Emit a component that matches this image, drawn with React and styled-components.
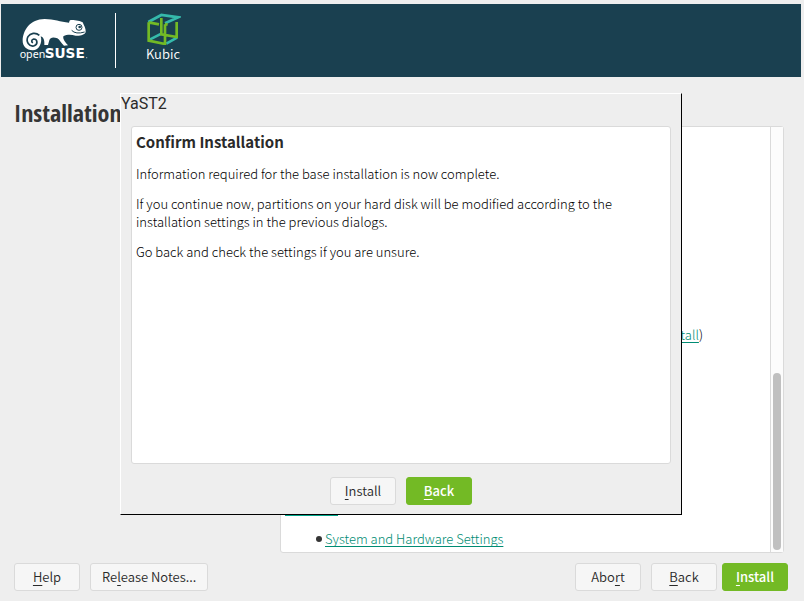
import React from "react";
import styled, { createGlobalStyle, css } from "styled-components";

const Global = createGlobalStyle`
  * { box-sizing: border-box; }
  body {
    margin: 0;
    background: #eeeeee;
    color: #000000;
    font: 300 13px/18px "Noto Sans CJK JP", "Noto Sans", sans-serif;
  }
`;

const Page = styled.div`
  display: flex;
  flex-direction: column;
  min-height: 100vh;
`;

const Banner = styled.header`
  display: flex;
  align-items: flex-start;
  margin: 4px 3px 0 1px;
  padding: 9px 18px;
  background: #1a4050;
  color: #ffffff;
`;

const BrandLogo = styled.svg`
  width: 70px;
  height: 47px;
  margin-top: 3px;
`;

const Separator = styled.div`
  width: 1px;
  height: 55px;
  margin: 0 29px 0 26px;
  background: #ffffff;
`;

const Product = styled.div`
  display: flex;
  flex-direction: column;
  align-items: center;
  font-size: 13px;
  font-weight: 350;
`;

const CubeLogo = styled.svg`
  width: 36px;
  height: 32px;
`;

const Main = styled.main`
  display: flex;
  flex: 1;
  padding: 0 20px 0 14px;
`;

const Title = styled.h1`
  flex: none;
  width: 266px;
  margin: 21px 0 0;
  color: #353535;
  font: bold 24px/30px "Open Sans Condensed", "Noto Sans Condensed", "Roboto Condensed", "Noto Sans CJK JP", sans-serif;
`;

const Panel = styled.section`
  display: flex;
  flex: 1;
  margin-top: 49px;
  border: 1px solid #dadada;
  border-radius: 3px;
  background: #ffffff;
`;

const Summary = styled.div`
  display: flex;
  flex: 1;
  flex-direction: column;
  justify-content: flex-end;
  padding: 0 4px 4px;
`;

const PartitionLine = styled.div`
  margin: 0 63px 171px;
  text-align: right;
`;

const SectionRule = styled.div`
  width: 53px;
  height: 1px;
  margin-bottom: 14px;
  background: #00a489;
`;

const List = styled.ul`
  margin: 0;
  padding: 0 0 0 31px;
  list-style: none;
`;

const Item = styled.li`
  display: flex;
  align-items: center;
  gap: 3px;

  &::before {
    content: "";
    width: 6px;
    height: 6px;
    border-radius: 50%;
    background: #353535;
  }
`;

const Link = styled.a`
  color: #008c73;
  text-decoration: underline;
  text-decoration-thickness: 1px;
  text-underline-offset: 2px;
  text-decoration-skip-ink: none;
`;

const Track = styled.div`
  display: flex;
  align-items: flex-end;
  width: 13px;
  padding: 2px;
  border-left: 1px solid #dadada;
  background: #fcfcfc;
`;

const Thumb = styled.div`
  width: 8px;
  height: 42%;
  border-radius: 4px;
  background: #c0c0c0;
`;

const Footer = styled.footer`
  display: flex;
  justify-content: space-between;
  padding: 10px 16px 10px 14px;
`;

const Group = styled.div`
  display: flex;
  gap: ${(p) => p.$gap || 10}px;
`;

const Button = styled.button`
  min-width: 66px;
  height: 28px;
  padding: 0 11px;
  border: 1px solid #dadada;
  border-radius: 3px;
  background: #f6f6f6;
  color: #2a2a2a;
  font: 350 13px/18px "Noto Sans CJK JP", "Noto Sans", sans-serif;

  ${(p) =>
    p.$primary &&
    css`
      border-color: #73ba25;
      background: #73ba25;
      color: #ffffff;
      font-weight: 500;
    `}
`;

const Key = styled.span`
  text-decoration: underline;
  text-decoration-thickness: 1px;
  text-underline-offset: 3px;
  text-decoration-skip-ink: none;
`;

const Overlay = styled.div`
  position: absolute;
  inset: 0;
  display: flex;
  padding: 93px 122px 86px 120px;
`;

const Dialog = styled.div`
  display: flex;
  flex: 1;
  flex-direction: column;
  border: 1px solid #000000;
  border-top-color: #ffffff;
  border-left-color: #ffffff;
  background: #eeeeee;
`;

const DialogTitle = styled.div`
  color: #2a2a2a;
  font: 16px/20px Roboto, sans-serif;
`;

const Message = styled.div`
  flex: 1;
  margin: 12px 10px 0;
  padding: 5px 4px;
  border: 1px solid #dadada;
  border-radius: 3px;
  background: #ffffff;
`;

const Heading = styled.h2`
  margin: 0 0 13px;
  color: #2a2a2a;
  font-size: 15px;
  line-height: 20px;
  font-weight: bold;
`;

const Text = styled.p`
  max-width: 500px;
  margin: 0 0 12px;
`;

const DialogActions = styled.div`
  display: flex;
  justify-content: center;
  gap: 10px;
  padding: 13px 0 9px;
`;

function Geeko() {
  return (
    <BrandLogo viewBox="57 48 210 141" role="img" aria-label="openSUSE">
      <path
        fill="#fff"
        d="M68 123C68 92 90 57 134 57C162 57 181 66 207 68C209 65 207 61 212 60C223 60 235 61 248 67C252 78 258 85 257 96C254 105 241 108 227 107C213 104 202 103 190 109C188 119 197 128 204 136L192 137C183 129 179 119 172 115C161 111 151 111 148 121L144 135L133 135C134 122 131 111 122 109C128 127 118 151 98 151C79 150 68 138 68 123Z"
      />
      <path
        d="M118 106C107 96 91 99 84 110C76 125 88 140 101 138C115 134 113 117 101 117C94 119 93 126 99 128"
        fill="none"
        stroke="#1a4050"
        strokeWidth="5"
      />
      <circle cx="237" cy="82" r="9" fill="none" stroke="#1a4050" strokeWidth="3" />
      <circle cx="239" cy="81" r="4" fill="#1a4050" />
      <path d="M215 91Q227 104 254 96" fill="none" stroke="#1a4050" strokeWidth="3" />
      <text x="59" y="175" fontFamily="Noto Sans" fontWeight="400" fontSize="32" fill="#fff">open</text>
      <text x="134" y="175" fontFamily="DejaVu Sans" fontWeight="700" fontSize="41" fill="#fff">SUSE</text>
      <circle cx="260" cy="173" r="2" fill="#9db0b8" />
    </BrandLogo>
  );
}

function Cube() {
  return (
    <CubeLogo viewBox="436 39 108 96" aria-hidden="true">
      <g fill="none" strokeWidth="8">
        <path d="M446 66L485 45L536 52L496 70M450 119L485 101M500 131L532 113" stroke="#35b9ab" />
        <path d="M447 67V122L496 132V73M447 67L478 73M485 54V103L531 111V66M496 72L504 74" stroke="#73ba25" />
      </g>
    </CubeLogo>
  );
}

export default function App() {
  return (
    <>
      <Global />
      <Page>
        <Banner>
          <Geeko />
          <Separator />
          <Product>
            <Cube />
            Kubic
          </Product>
        </Banner>
        <Main>
          <Title>Installation</Title>
          <Panel>
            <Summary>
              <PartitionLine>
                <Link href="#partition">tall</Link>)
              </PartitionLine>
              <SectionRule />
              <List>
                <Item>
                  <Link href="#hardware">System and Hardware Settings</Link>
                </Item>
              </List>
            </Summary>
            <Track>
              <Thumb />
            </Track>
          </Panel>
        </Main>
        <Footer>
          <Group>
            <Button><Key>H</Key>elp</Button>
            <Button>Re<Key>l</Key>ease Notes...</Button>
          </Group>
          <Group $gap={5}>
            <Group>
              <Button>Abo<Key>r</Key>t</Button>
              <Button><Key>B</Key>ack</Button>
            </Group>
            <Button $primary><Key>I</Key>nstall</Button>
          </Group>
        </Footer>
      </Page>
      <Overlay>
        <Dialog role="dialog" aria-labelledby="confirm-heading">
          <DialogTitle>YaST2</DialogTitle>
          <Message>
            <Heading id="confirm-heading">Confirm Installation</Heading>
            <Text>Information required for the base installation is now complete.</Text>
            <Text>
              If you continue now, partitions on your hard disk will be modified according to the
              installation settings in the previous dialogs.
            </Text>
            <Text>Go back and check the settings if you are unsure.</Text>
          </Message>
          <DialogActions>
            <Button><Key>I</Key>nstall</Button>
            <Button $primary><Key>B</Key>ack</Button>
          </DialogActions>
        </Dialog>
      </Overlay>
    </>
  );
}
